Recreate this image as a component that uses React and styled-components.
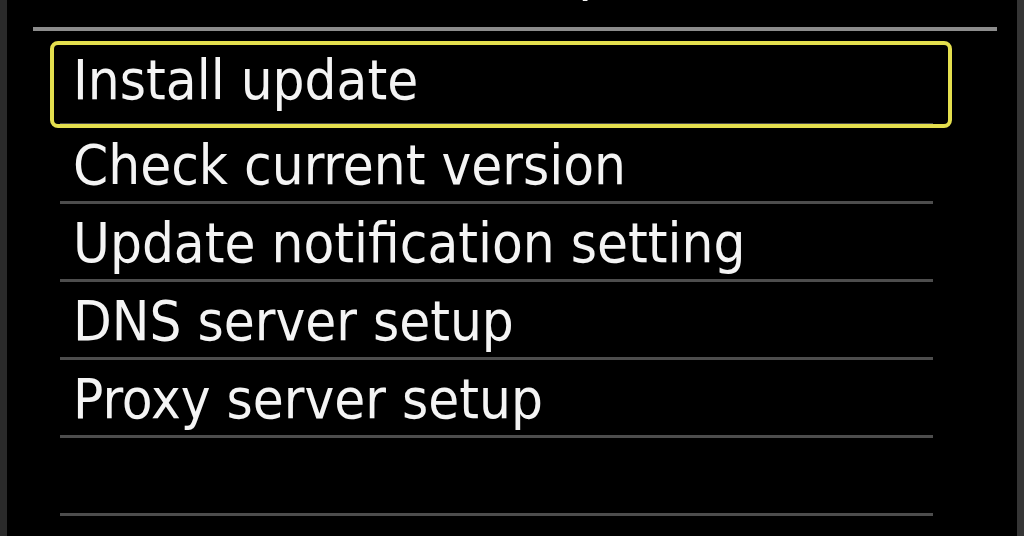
import styled, { createGlobalStyle } from 'styled-components';

const GlobalStyle = createGlobalStyle`
  html, body {
    margin: 0;
    padding: 0;
    background: #000;
  }
  body {
    font-family: "DejaVu Sans Condensed", "DejaVu Sans", sans-serif;
    font-stretch: condensed;
  }
`;

const Screen = styled.div`
  display: flex;
  width: 1024px;
  height: 536px;
  overflow: hidden;
  background: #000;
`;

const SideBar = styled.div`
  width: 7px;
  flex-shrink: 0;
  background: ${p => p.$right ? '#353535' : '#2a2a2a'};
`;

const Main = styled.div`
  flex: 1;
  display: flex;
  flex-direction: column;
`;

// the screen title sits above the visible area; only a sliver shows
const TitleBar = styled.div`
  height: 27px;
  overflow: hidden;
  text-align: center;
`;

const TitleText = styled.div`
  margin-top: -58px;
  font-size: 56px;
  line-height: 56px;
  color: #f2f2f2;
`;

const Rule = styled.div`
  height: 4px;
  margin: 0 20px 0 26px;
  background: #8c8c8c;
`;

const MenuList = styled.ul`
  list-style: none;
  margin: 17px 0 0 53px;
  padding: 0;
  width: 873px;
`;

const MenuRow = styled.li`
  position: relative;
  box-sizing: border-box;
  height: 78px;
  padding: 3px 0 0 13px;
  border-bottom: 3px solid #4d4d4d;
  font-size: 56px;
  line-height: 72px;
  color: #f4f4f4;
  white-space: nowrap;

  ${p => p.$selected && `
    padding-top: 0;
    line-height: 64px;
    &::before {
      content: '';
      position: absolute;
      left: -10px;
      right: -19px;
      top: -7px;
      bottom: -5px;
      border: 4px solid #e4df4e;
      border-radius: 8px;
    }
  `}
`;

const items = [
  'Install update',
  'Check current version',
  'Update notification setting',
  'DNS server setup',
  'Proxy server setup',
  '',
];

const App = () => (
  <>
    <GlobalStyle />
    <Screen>
      <SideBar />
      <Main>
        <TitleBar>
          <TitleText>Firmware update</TitleText>
        </TitleBar>
        <Rule />
        <MenuList>
          {items.map((label, i) => (
            <MenuRow key={i} $selected={i === 0}>{label}</MenuRow>
          ))}
        </MenuList>
      </Main>
      <SideBar $right />
    </Screen>
  </>
);

export default App;
